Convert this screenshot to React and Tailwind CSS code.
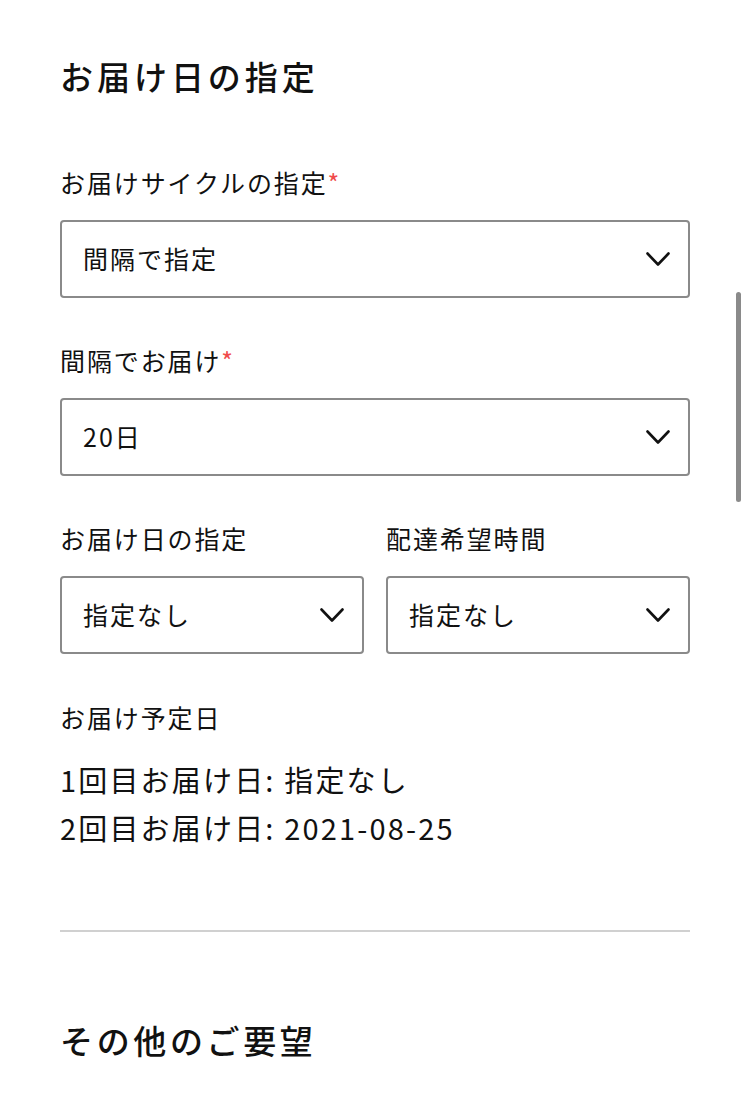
const font = { fontFamily: '"Noto Sans CJK JP", "Noto Sans", sans-serif' };

const Chevron = () => (
  <svg width="24" height="15" viewBox="0 0 24 15" fill="none" className="shrink-0">
    <path d="M1.5 1.5 12 12.5 22.5 1.5" stroke="#111" strokeWidth="2.6" strokeLinecap="round" strokeLinejoin="round" />
  </svg>
);

const Select = ({ value }) => (
  <div className="flex h-[78px] items-center justify-between rounded-[4px] border-2 border-[#8a8a8a] bg-white pl-[21px] pr-[18px]">
    <span className="text-[25px] tracking-[0.08em] text-[#111]">{value}</span>
    <Chevron />
  </div>
);

const Label = ({ children, required }) => (
  <div className="text-[25px] leading-[36px] tracking-[0.075em] text-[#111]">
    {children}
    {required && <span className="text-[#f04b4b]">*</span>}
  </div>
);

export default function App() {
  return (
    <div className="relative min-h-[1106px] bg-white px-[60px] pt-[52px]" style={font}>
      <h2 className="text-[33px] font-medium leading-[48px] tracking-[0.12em] text-[#111]">お届け日の指定</h2>

      <div className="mt-[64px]">
        <Label required>お届けサイクルの指定</Label>
        <div className="mt-[20px]">
          <Select value="間隔で指定" />
        </div>
      </div>

      <div className="mt-[44px]">
        <Label required>間隔でお届け</Label>
        <div className="mt-[20px]">
          <Select value="20日" />
        </div>
      </div>

      <div className="mt-[44px] grid grid-cols-2 gap-[22px]">
        <div>
          <Label>お届け日の指定</Label>
          <div className="mt-[20px]">
            <Select value="指定なし" />
          </div>
        </div>
        <div>
          <Label>配達希望時間</Label>
          <div className="mt-[20px]">
            <Select value="指定なし" />
          </div>
        </div>
      </div>

      <div className="mt-[45px]">
        <Label>お届け予定日</Label>
        <div className="mt-[20px] text-[29px] leading-[48px] tracking-[0.075em] text-[#111]">
          <div>1回目お届け日: 指定なし</div>
          <div>2回目お届け日: 2021-08-25</div>
        </div>
      </div>

      <div className="mt-[79px] h-[2px] bg-[#d0d0d0]" />

      <h2 className="mt-[84px] text-[33px] font-medium leading-[48px] tracking-[0.11em] text-[#111]">その他のご要望</h2>

      <div className="absolute right-[9px] top-[292px] h-[210px] w-[5px] rounded-full bg-[#8a8a8a]" />
    </div>
  );
}
